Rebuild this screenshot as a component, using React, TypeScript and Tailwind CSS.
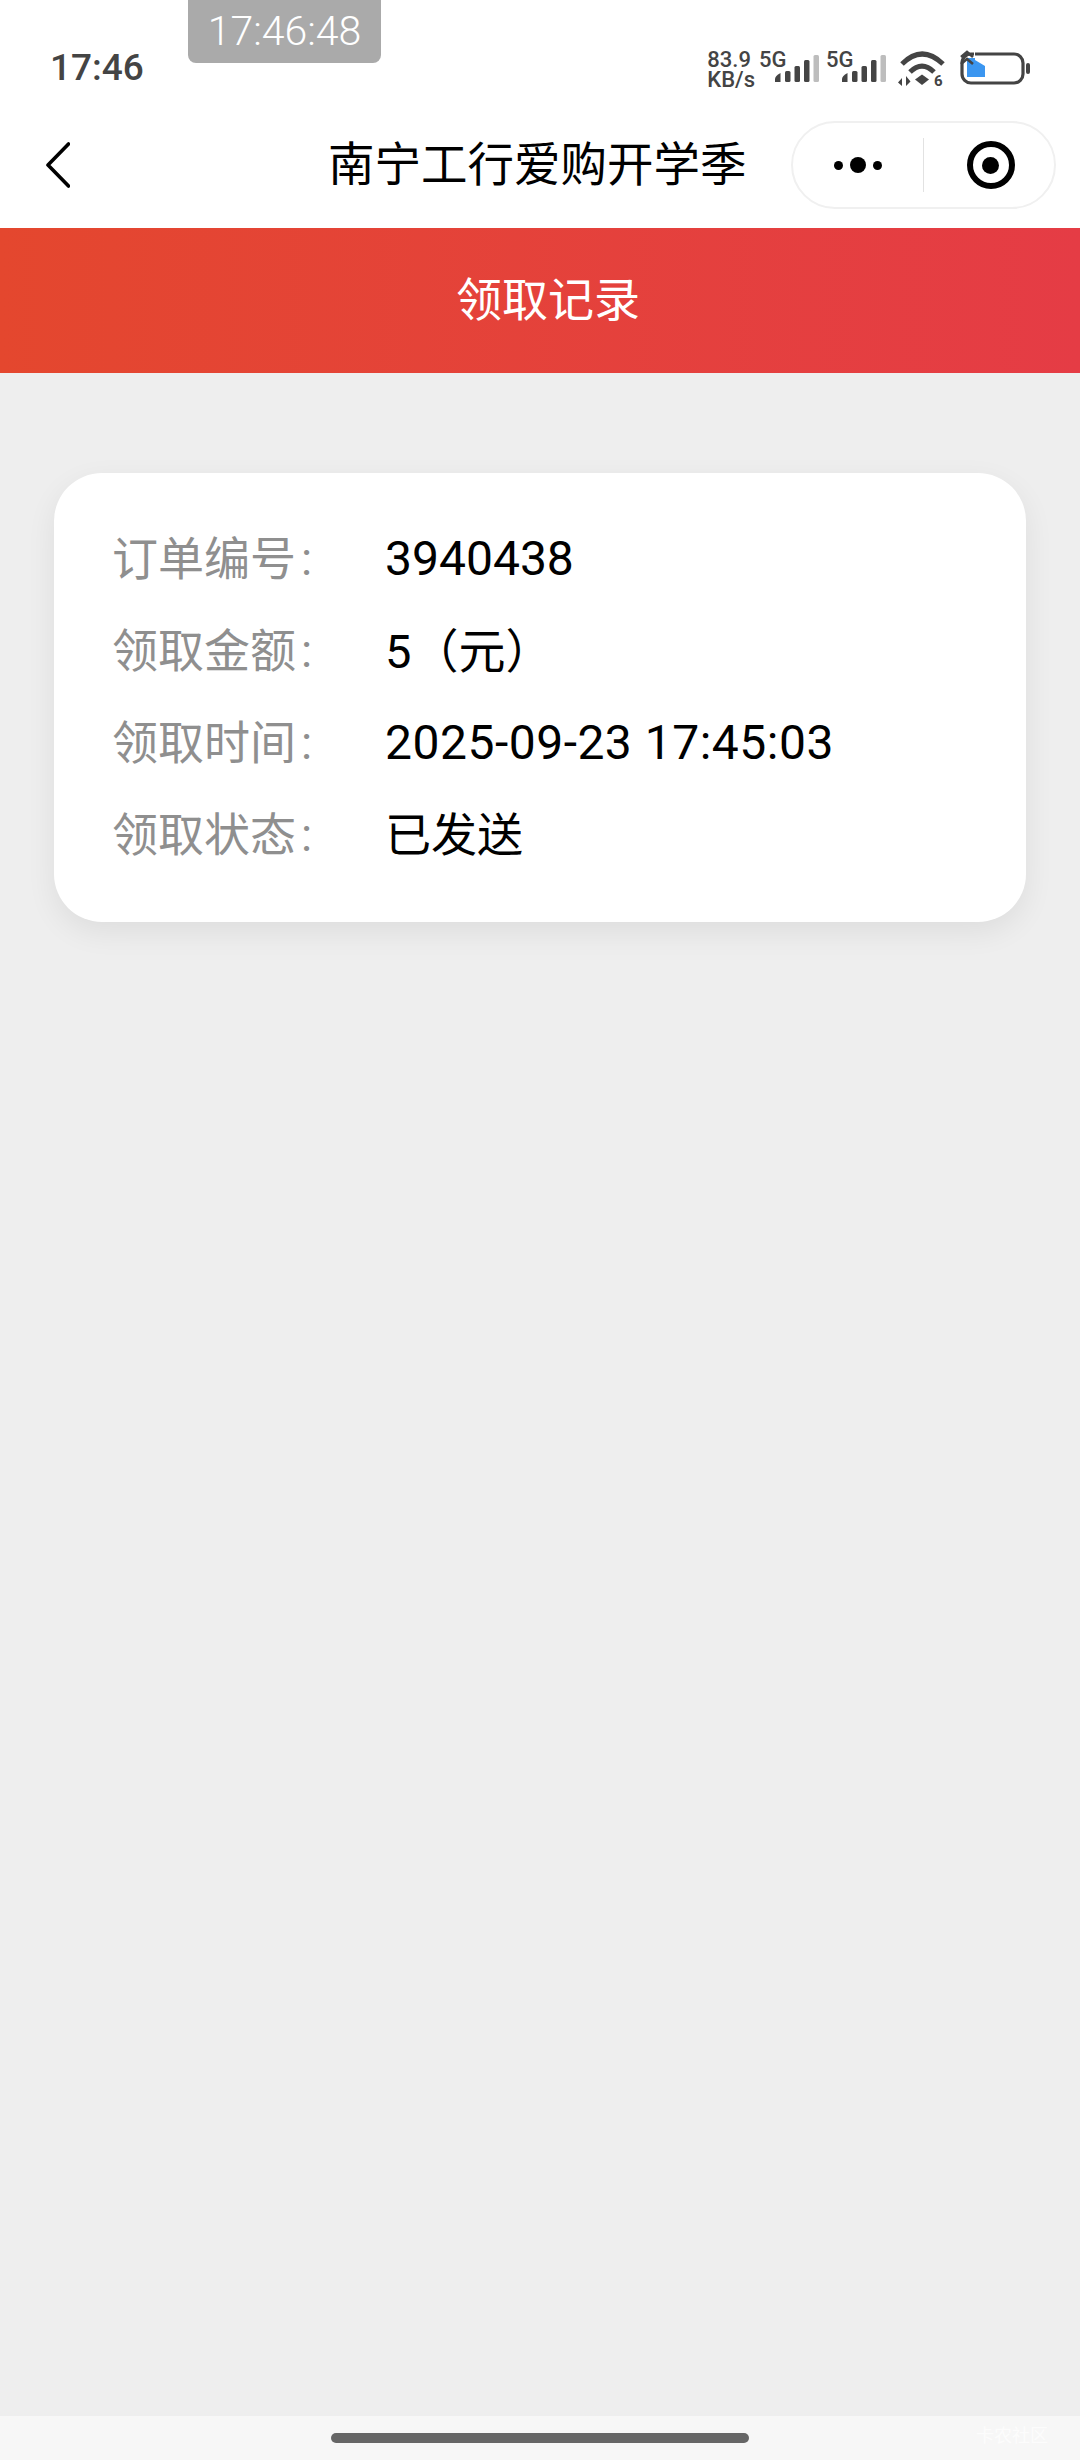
const rows = [
  { label: '订单编号', value: '3940438', valueClass: 'text-[48px]' },
  { label: '领取金额', value: '5（元）', valueClass: 'text-[47px]' },
  { label: '领取时间', value: '2025-09-23 17:45:03', valueClass: 'text-[48px] tracking-[0.5px]' },
  { label: '领取状态', value: '已发送', valueClass: 'text-[46px]' },
];

function Signal() {
  return (
    <svg width="44" height="28" viewBox="0 0 44 28" className="block">
      <path d="M0 27v-3q0-3 5.500-6v9z" fill="#444" />
      <rect x="10" y="16" width="5.500" height="11" rx="1.500" fill="#444" />
      <rect x="19.500" y="11" width="5.500" height="16" rx="1.500" fill="#444" />
      <rect x="29" y="5" width="5.500" height="22" rx="1.500" fill="#444" />
      <rect x="38.500" y="0" width="5.500" height="27" rx="1.500" fill="#bdbdbd" />
    </svg>
  );
}

function Wifi() {
  return (
    <svg width="48" height="40" viewBox="0 0 48 40" className="block">
      <path d="M4 14Q24-6 45 14" fill="none" stroke="#444" strokeWidth="5" />
      <path d="M12 22Q24 10 36 22" fill="none" stroke="#444" strokeWidth="5" />
      <path d="M17 29.500l7-5 7 5-7 5.500z" fill="#444" />
      <path d="M4 36v-8l-4 4.500zM8 26v10l4.500-4.500z" fill="#444" />
      <text x="36" y="36" fontSize="15" fontWeight="700" fill="#444" fontFamily="Roboto, sans-serif">6</text>
    </svg>
  );
}

function Battery() {
  return (
    <svg width="70" height="38" viewBox="0 0 70 38" className="block">
      <rect x="2" y="4" width="61" height="29" rx="9" fill="none" stroke="#444" strokeWidth="3.200" />
      <rect x="66" y="13" width="4" height="11" rx="2" fill="#444" />
      <rect x="7" y="8" width="18" height="19" fill="#3b96f0" />
      <path d="M0 0h15v10l10 6v-8H14V0z" fill="#fff" />
      <path d="M1 7l6-5 6 5M1 14l6-5 6 5" fill="none" stroke="#444" strokeWidth="2.600" />
    </svg>
  );
}

export default function App() {
  return (
    <div className="relative flex h-[2460px] w-[1080px] flex-col overflow-hidden bg-[#eeeeee] font-['Roboto','Noto_Sans_CJK_SC',sans-serif]">
      {/* Screenshot timestamp */}
      <div className="absolute left-[188px] top-0 flex h-[63px] w-[193px] items-center justify-center rounded-b-lg bg-[#aaaaaa] text-[41px] font-light text-white">
        17:46:48
      </div>

      {/* Status bar */}
      <div className="flex h-[110px] items-start justify-between bg-white pl-[50px] pr-[50px] pt-[45px]">
        <span className="text-[37px] font-medium leading-[45px] text-[#444444]">17:46</span>
        <div className="flex items-start pt-[5px]">
          <div className="mr-[4px] flex flex-col text-[22px] font-medium leading-[20px] text-[#444444]">
            <span>83.9</span>
            <span>KB/s</span>
          </div>
          <div className="relative mr-[7px] w-[60px]">
            <span className="absolute left-0 top-0 text-[22px] font-medium leading-[19px] text-[#444444]">5G</span>
            <div className="absolute left-[16px] top-[5px]"><Signal /></div>
          </div>
          <div className="relative mr-[12px] w-[60px]">
            <span className="absolute left-0 top-0 text-[22px] font-medium leading-[19px] text-[#444444]">5G</span>
            <div className="absolute left-[16px] top-[5px]"><Signal /></div>
          </div>
          <div className="mr-[14px]"><Wifi /></div>
          <Battery />
        </div>
      </div>

      {/* Nav bar */}
      <div className="flex h-[118px] items-center bg-white pb-[8px] pr-[24px]">
        <svg width="24" height="46" viewBox="0 0 24 46" className="ml-[46px] block">
          <path d="M22.500 2L2 23l20.500 21" fill="none" stroke="#000" strokeWidth="3.600" strokeLinecap="round" strokeLinejoin="round" />
        </svg>
        <div className="ml-[258px] flex-1 text-[46.500px] leading-none text-black">南宁工行爱购开学季</div>
        <div className="flex h-[88px] w-[265px] items-center rounded-full border-2 border-[#f0f0f0] bg-white">
          <div className="flex w-[130px] items-center justify-center gap-[7px]">
            <span className="h-[9px] w-[9px] rounded-full bg-black" />
            <span className="h-[16px] w-[16px] rounded-full bg-black" />
            <span className="h-[9px] w-[9px] rounded-full bg-black" />
          </div>
          <div className="h-[54px] w-[1px] bg-[#e2e2e2]" />
          <div className="flex flex-1 items-center justify-center">
            <div className="ml-[3px] flex h-[48px] w-[48px] items-center justify-center rounded-full border-[6px] border-black">
              <span className="h-[17px] w-[17px] rounded-full bg-black" />
            </div>
          </div>
        </div>
      </div>

      {/* Red page header */}
      <div className="flex h-[145px] items-center justify-center bg-gradient-to-r from-[#e4472e] to-[#e53c45] pl-[16px] text-[46px] text-white">
        领取记录
      </div>

      {/* Record card */}
      <div className="flex-1 px-[54px] pt-[100px]">
        <div className="flex h-[449px] flex-col rounded-[48px] bg-white pl-[58px] pt-[40px] shadow-[0_10px_30px_rgba(0,0,0,0.07)]">
          {rows.map((row) => (
            <div key={row.label} className="flex h-[92px] items-center">
              <span className="w-[273px] text-[46px] leading-none text-[#8f8f8f]">
                {row.label}
                <span className="ml-[5px]">:</span>
              </span>
              <span className={`leading-none text-black ${row.valueClass}`}>{row.value}</span>
            </div>
          ))}
        </div>
      </div>

      {/* Gesture bar */}
      <div className="relative flex h-[44px] justify-center bg-[#f7f7f7] pt-[17px]">
        <div className="h-[10px] w-[418px] rounded-full bg-[#666666]" />
        <span className="absolute right-[32px] top-[6px] text-[18px] text-white/70">卡农社区</span>
      </div>
    </div>
  );
}
